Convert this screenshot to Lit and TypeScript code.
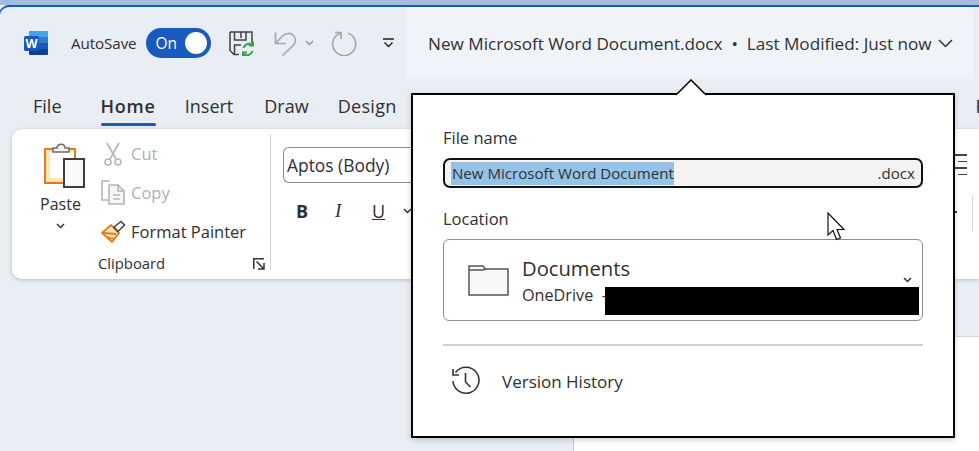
import { LitElement, html, css } from "lit";
import { customElement } from "lit/decorators.js";

const wordIcon = html`<svg class="word" width="24" height="24" viewBox="0 0 24 24">
  <path d="M5 0H23a1 1 0 0 1 1 1V6H5Z" fill="#41a5ee"/>
  <rect x="5" y="6" width="19" height="6" fill="#2b7cd3"/>
  <rect x="5" y="12" width="19" height="6" fill="#185abd"/>
  <path d="M5 18H24V23a1 1 0 0 1-1 1H6a1 1 0 0 1-1-1Z" fill="#103f91"/>
  <rect x="0" y="5" width="15" height="15" rx="1.5" fill="#185abd"/>
  <text x="7.5" y="17" text-anchor="middle" font-size="12.5" font-weight="700" font-family="Open Sans, sans-serif" fill="#fff">W</text>
</svg>`;

const saveIcon = html`<svg width="25" height="25" viewBox="0 0 25 25" fill="none">
  <path d="M1 1H23V12M1 1V19.5L5 23.5H10M5.5 1V9H17V1M12 1V7M5.5 23V14H12" stroke="#404040" stroke-width="1.5"/>
  <path d="M14.5 17A6 6 0 0 1 24 14M24 10.5V14.6H20M23.5 20A6 6 0 0 1 14 23M14 25V21.5H18" stroke="#2da44e" stroke-width="2"/>
</svg>`;

const undoIcon = html`<svg width="23" height="25" viewBox="0 0 23 25" fill="none" stroke="#a8a8a8" stroke-width="1.7">
  <path d="M1.5 1.5V12.5H12M1.5 12.5 8 5.5C11 2.5 16.5 .8 19.5 4.5 22.5 8 21.5 12 19 14.5L8.5 24.5"/>
</svg>`;

const redoIcon = html`<svg width="26" height="25" viewBox="0 0 26 25" fill="none" stroke="#a8a8a8" stroke-width="1.7">
  <path d="M4 1.5H10V8M10 2A11.5 11.5 0 1 0 17 2.2"/>
</svg>`;

const qatIcon = html`<svg width="11" height="10" viewBox="0 0 11 10" fill="none" stroke="#222" stroke-width="1.4">
  <path d="M0 1H11M1.5 4.5 5.5 8.5 9.5 4.5"/>
</svg>`;

const pasteIcon = html`<svg width="41" height="46" viewBox="0 0 41 46" fill="none">
  <rect x="1" y="7" width="30" height="34" fill="#fde7b0" stroke="#e07b14" stroke-width="2"/>
  <rect x="6" y="10" width="24" height="26" fill="#fff"/>
  <path d="M9 10V6H13C13 1 21 1 21 6H25V10Z" fill="#f2f2f2" stroke="#6b6b6b" stroke-width="1.5"/>
  <rect x="20" y="17" width="20" height="28" fill="#f9f9f9" stroke="#3f3f3f" stroke-width="2"/>
</svg>`;

const cutIcon = html`<svg width="18" height="24" viewBox="0 0 18 24" fill="none" stroke="#b5b5b5" stroke-width="1.6">
  <path d="M3 1 12 17M15 1 6 17"/><circle cx="4" cy="20" r="3"/><circle cx="14" cy="20" r="3"/>
</svg>`;

const copyIcon = html`<svg width="24" height="25" viewBox="0 0 24 25" fill="none" stroke="#b5b5b5" stroke-width="1.6">
  <path d="M9 1H1V20H7"/>
  <path d="M8 5H17L23 11V24H8ZM17 5V11H23" fill="#f7f7f7"/>
  <path d="M12 15H19M12 19H19"/>
</svg>`;

const painterIcon = html`<svg width="25" height="23" viewBox="0 0 25 23" fill="none">
  <path d="M1 13 10 5 18 13 11 22Z" fill="#fbe3bd" stroke="#e07b14" stroke-width="1.8"/>
  <path d="M2 13 15 14M6 17 13 19" stroke="#e07b14" stroke-width="1.8"/>
  <path d="M13 7 20 1.5 23.5 5 17 11.5Z" fill="#fff" stroke="#404040" stroke-width="1.5"/>
</svg>`;

const expandIcon = html`<svg width="12" height="12" viewBox="0 0 12 12" fill="none" stroke="#333" stroke-width="1.5">
  <path d="M.8 11V.8H11M3.5 3.5 10.5 10.5M5 11H11V5"/>
</svg>`;

const chev = html`<svg width="9" height="6" viewBox="0 0 9 6" fill="none" stroke="#333" stroke-width="1.5"><path d="M1 1 4.5 4.5 8 1"/></svg>`;

const folderIcon = html`<svg width="41" height="32" viewBox="0 0 41 32" fill="none">
  <path d="M1 31V2H15L17 5H40V31Z" fill="#f8f8f8" stroke="#555" stroke-width="1.5"/>
  <path d="M1 6H15L18 5" stroke="#555" stroke-width="1.5"/>
</svg>`;

const clockIcon = html`<svg width="29" height="30" viewBox="0 0 29 30" fill="none" stroke="#333" stroke-width="1.6">
  <path d="M4.5 6.5A13 13 0 1 1 2 15"/>
  <path d="M2 3V9H8"/>
  <path d="M14.5 7V16L19.5 21"/>
</svg>`;

@customElement("app-root")
export class AppRoot extends LitElement {
  static styles = css`
    :host {
      display: block;
      position: relative;
      width: 979px;
      height: 451px;
      overflow: hidden;
      background: #e9edf4;
      font-family: "Open Sans", "Noto Sans", sans-serif;
      color: #303030;
    }
    svg { flex: none; }
    .top { height: 5px; background: #a6bbdc; }
    .window { border-top: 2px solid #185abd; border-top-left-radius: 10px; background: #e9edf4; height: 444px; display: flex; flex-direction: column; box-shadow: -1px 0 0 #185abd; }
    .titlebar { height: 72px; display: flex; align-items: center; flex: none; }
    .qat { display: flex; align-items: center; padding-left: 24px; width: 407px; box-sizing: border-box; flex: none; }
    .autosave { font-size: 15.2px; margin-left: 23px; letter-spacing: -.1px; flex: none; }
    .toggle { width: 65px; height: 30px; border-radius: 15px; background: #185abd; color: #fff; display: flex; align-items: center; justify-content: space-between; padding: 0 4px 0 10px; box-sizing: border-box; margin-left: 9px; font-size: 15.5px; flex: none; }
    .knob { width: 22px; height: 22px; border-radius: 50%; background: #fff; }
    .save { margin-left: 18px; display: flex; }
    .undo { margin-left: 20px; display: flex; }
    .small-chev { margin-left: 8px; display: flex; opacity: .45; }
    .redo { margin-left: 17px; display: flex; }
    .qat-more { margin-left: 26px; display: flex; }
    .title { width: 566px; height: 72px; flex: none; background: #f0f3f7; display: flex; align-items: center; padding-left: 21px; box-sizing: border-box; font-size: 17.15px; white-space: pre; }
    .title svg { margin-left: 6px; }
    .tabs { height: 50px; flex: none; display: flex; font-size: 18px; }
    .tabrow { display: flex; padding-left: 33px; align-items: flex-start; padding-top: 14px; line-height: 26px; white-space: nowrap; }
    .tabrow span:nth-child(1) { margin-right: 39px; }
    .tabrow span:nth-child(2) { margin-right: 29px; font-weight: 600; letter-spacing: .8px; position: relative; }
    .tabrow span:nth-child(2)::after { content: ""; position: absolute; left: 0; right: 0; bottom: -7px; height: 3px; border-radius: 2px; background: #185abd; }
    .tabrow span:nth-child(3) { margin-right: 31px; }
    .tabrow span:nth-child(4) { margin-right: 29px; }
    .tabrow span:nth-child(5) { margin-right: 579px; letter-spacing: .3px; }
    .ribbon { margin-left: 12px; height: 150px; flex: none; background: #fff; border-radius: 10px 0 0 10px; box-shadow: 0 1px 4px rgba(0,0,0,.2); display: flex; }
    .clip { width: 259px; flex: none; display: flex; flex-direction: column; box-sizing: border-box; border-right: 1px solid #d6d6d6; margin: 5px 0 9px; }
    .clip-main { display: flex; height: 118px; flex: none; }
    .paste { width: 89px; flex: none; display: flex; flex-direction: column; align-items: center; padding: 8px 0 0 8px; box-sizing: border-box; font-size: 16px; }
    .paste svg:first-child { margin-left: 7px; }
    .paste .lbl { margin-top: 4px; line-height: 24px; }
    .paste svg:last-child { margin-top: 7px; }
    .actions { display: flex; flex-direction: column; font-size: 16.5px; }
    .action { display: flex; align-items: center; height: 39px; flex: none; white-space: nowrap; }
    .action .ic { width: 24px; display: flex; justify-content: center; margin-right: 6px; }
    .dim { color: #b0b0b0; }
    .clip-foot { display: flex; align-items: flex-start; height: 18px; font-size: 14.8px; line-height: 22px; padding-left: 86px; }
    .clip-foot svg { margin: 6px 5px 0 auto; }
    .font { padding: 18px 0 0 12px; flex: none; width: 300px; box-sizing: border-box; }
    .fontbox { height: 36px; width: 300px; border: 1px solid #8c8c8c; border-right: none; border-radius: 6px 0 0 6px; box-sizing: border-box; padding-left: 3px; display: flex; align-items: center; font-size: 17.4px; }
    .fmt { display: flex; align-items: center; margin-top: 15px; padding-left: 13px; font-size: 18px; line-height: 26px; }
    .fmt b { width: 39px; }
    .fmt i { width: 37px; font-family: "Liberation Serif", serif; font-size: 19px; }
    .fmt u { width: 31px; }
    .right { margin-left: auto; display: flex; align-items: flex-start; padding-top: 25px; padding-right: 6px; gap: 5px; }
    .right .sep { width: 1px; height: 36px; background: #d6d6d6; margin-top: 41px; }
    .rcol { display: flex; flex-direction: column; width: 12px; }
    .lines { height: 21px; display: flex; flex-direction: column; justify-content: space-between; }
    .lines i { display: block; height: 1.5px; background: #444; }
    .lines i:nth-child(2n) { margin-left: 3px; }
    .dot { width: 2px; height: 2px; background: #333; margin-top: 36px; }
    .below { flex: 1; display: flex; padding: 57px 0 0 573px; }
    .page { flex: 1; background: #fff; border-top: 1px solid #d4d8de; border-left: 1px solid #c4c8ce; }

    .pop { position: absolute; left: 411px; top: 93px; width: 544px; height: 345px; box-sizing: border-box; background: #fff; border: 2px solid #000; padding: 32px 30px 0; box-shadow: 0 2px 6px rgba(0,0,0,.18); }
    .caret { position: absolute; left: 262px; top: -16px; display: block; }
    .label { font-size: 16.5px; line-height: 22px; }
    .input { height: 30px; margin-top: 9px; box-sizing: border-box; border: 2.5px solid #111; border-radius: 7px; background: #f3f3f3; display: flex; align-items: center; justify-content: space-between; padding: 0 6px; font-size: 15.1px; }
    .sel { background: #95c3e8; line-height: 23px; width: 223px; white-space: nowrap; overflow: hidden; padding-left: 1px; box-sizing: border-box; }
    .loc-label { margin-top: 20px; }
    .loc { position: relative; height: 82px; margin-top: 9px; box-sizing: border-box; border: 1px solid #8e8e8e; border-radius: 6px; display: flex; align-items: center; padding-left: 24px; }
    .loc-text { margin-left: 13px; display: flex; flex-direction: column; }
    .loc-a { font-size: 20.2px; line-height: 26px; }
    .loc-b { font-size: 16.2px; line-height: 22px; margin-top: 3px; white-space: pre; }
    .loc-chev { position: absolute; right: 10px; top: 37px; display: flex; }
    .redact { position: absolute; left: 161px; top: 47px; width: 314px; height: 28px; background: #000; }
    .sepline { height: 2px; background: #d0d0d0; margin-top: 23px; }
    .vh { display: flex; align-items: center; margin-top: 20px; padding-left: 8px; font-size: 17px; }
    .vh span { margin-left: 22px; }
    .cursor { position: absolute; left: 827px; top: 212px; display: block; }
  `;

  render() {
    return html`
      <div class="top"></div>
      <div class="window">
        <div class="titlebar">
          <div class="qat">
            ${wordIcon}
            <span class="autosave">AutoSave</span>
            <div class="toggle"><span>On</span><div class="knob"></div></div>
            <span class="save">${saveIcon}</span>
            <span class="undo">${undoIcon}</span>
            <span class="small-chev">${chev}</span>
            <span class="redo">${redoIcon}</span>
            <span class="qat-more">${qatIcon}</span>
          </div>
          <div class="title">New Microsoft Word Document.docx  •  Last Modified: Just now<svg width="15" height="9" viewBox="0 0 15 9" fill="none" stroke="#333" stroke-width="1.5"><path d="M1 1 7.5 7.5 14 1"/></svg></div>
        </div>
        <div class="tabs">
          <div class="tabrow"><span>File</span><span>Home</span><span>Insert</span><span>Draw</span><span>Design</span><span>F</span></div>
        </div>
        <div class="ribbon">
          <div class="clip">
            <div class="clip-main">
              <div class="paste">${pasteIcon}<span class="lbl">Paste</span>${chev}</div>
              <div class="actions">
                <div class="action dim"><span class="ic">${cutIcon}</span>Cut</div>
                <div class="action dim"><span class="ic">${copyIcon}</span>Copy</div>
                <div class="action"><span class="ic">${painterIcon}</span>Format Painter</div>
              </div>
            </div>
            <div class="clip-foot"><span>Clipboard</span>${expandIcon}</div>
          </div>
          <div class="font">
            <div class="fontbox">Aptos (Body)</div>
            <div class="fmt"><b>B</b><i>I</i><u>U</u>${chev}</div>
          </div>
          <div class="right">
            <div class="rcol">
              <div class="lines"><i></i><i></i><i></i><i></i></div>
              <div class="dot"></div>
            </div>
            <div class="sep"></div>
          </div>
        </div>
        <div class="below"><div class="page"></div></div>
      </div>

      <div class="pop">
        <svg class="caret" width="32" height="17" viewBox="0 0 32 17"><path d="M1 16 16 1 31 16" fill="#fff" stroke="#000" stroke-width="1.5"/><rect x="2" y="15.5" width="28" height="2" fill="#fff"/></svg>
        <div class="label">File name</div>
        <div class="input"><span class="sel">New Microsoft Word Document</span><span>.docx</span></div>
        <div class="label loc-label">Location</div>
        <div class="loc">
          ${folderIcon}
          <div class="loc-text">
            <span class="loc-a">Documents</span>
            <span class="loc-b">OneDrive  -</span>
          </div>
          <span class="loc-chev">${chev}</span>
          <div class="redact"></div>
        </div>
        <div class="sepline"></div>
        <div class="vh">${clockIcon}<span>Version History</span></div>
      </div>
      <svg class="cursor" width="20" height="29" viewBox="0 0 20 29"><path d="M1 1V23L6 18.5 9.5 27.5 13.5 26 10 17.5H17Z" fill="#fff" stroke="#111" stroke-width="1.2"/></svg>
    `;
  }
}
